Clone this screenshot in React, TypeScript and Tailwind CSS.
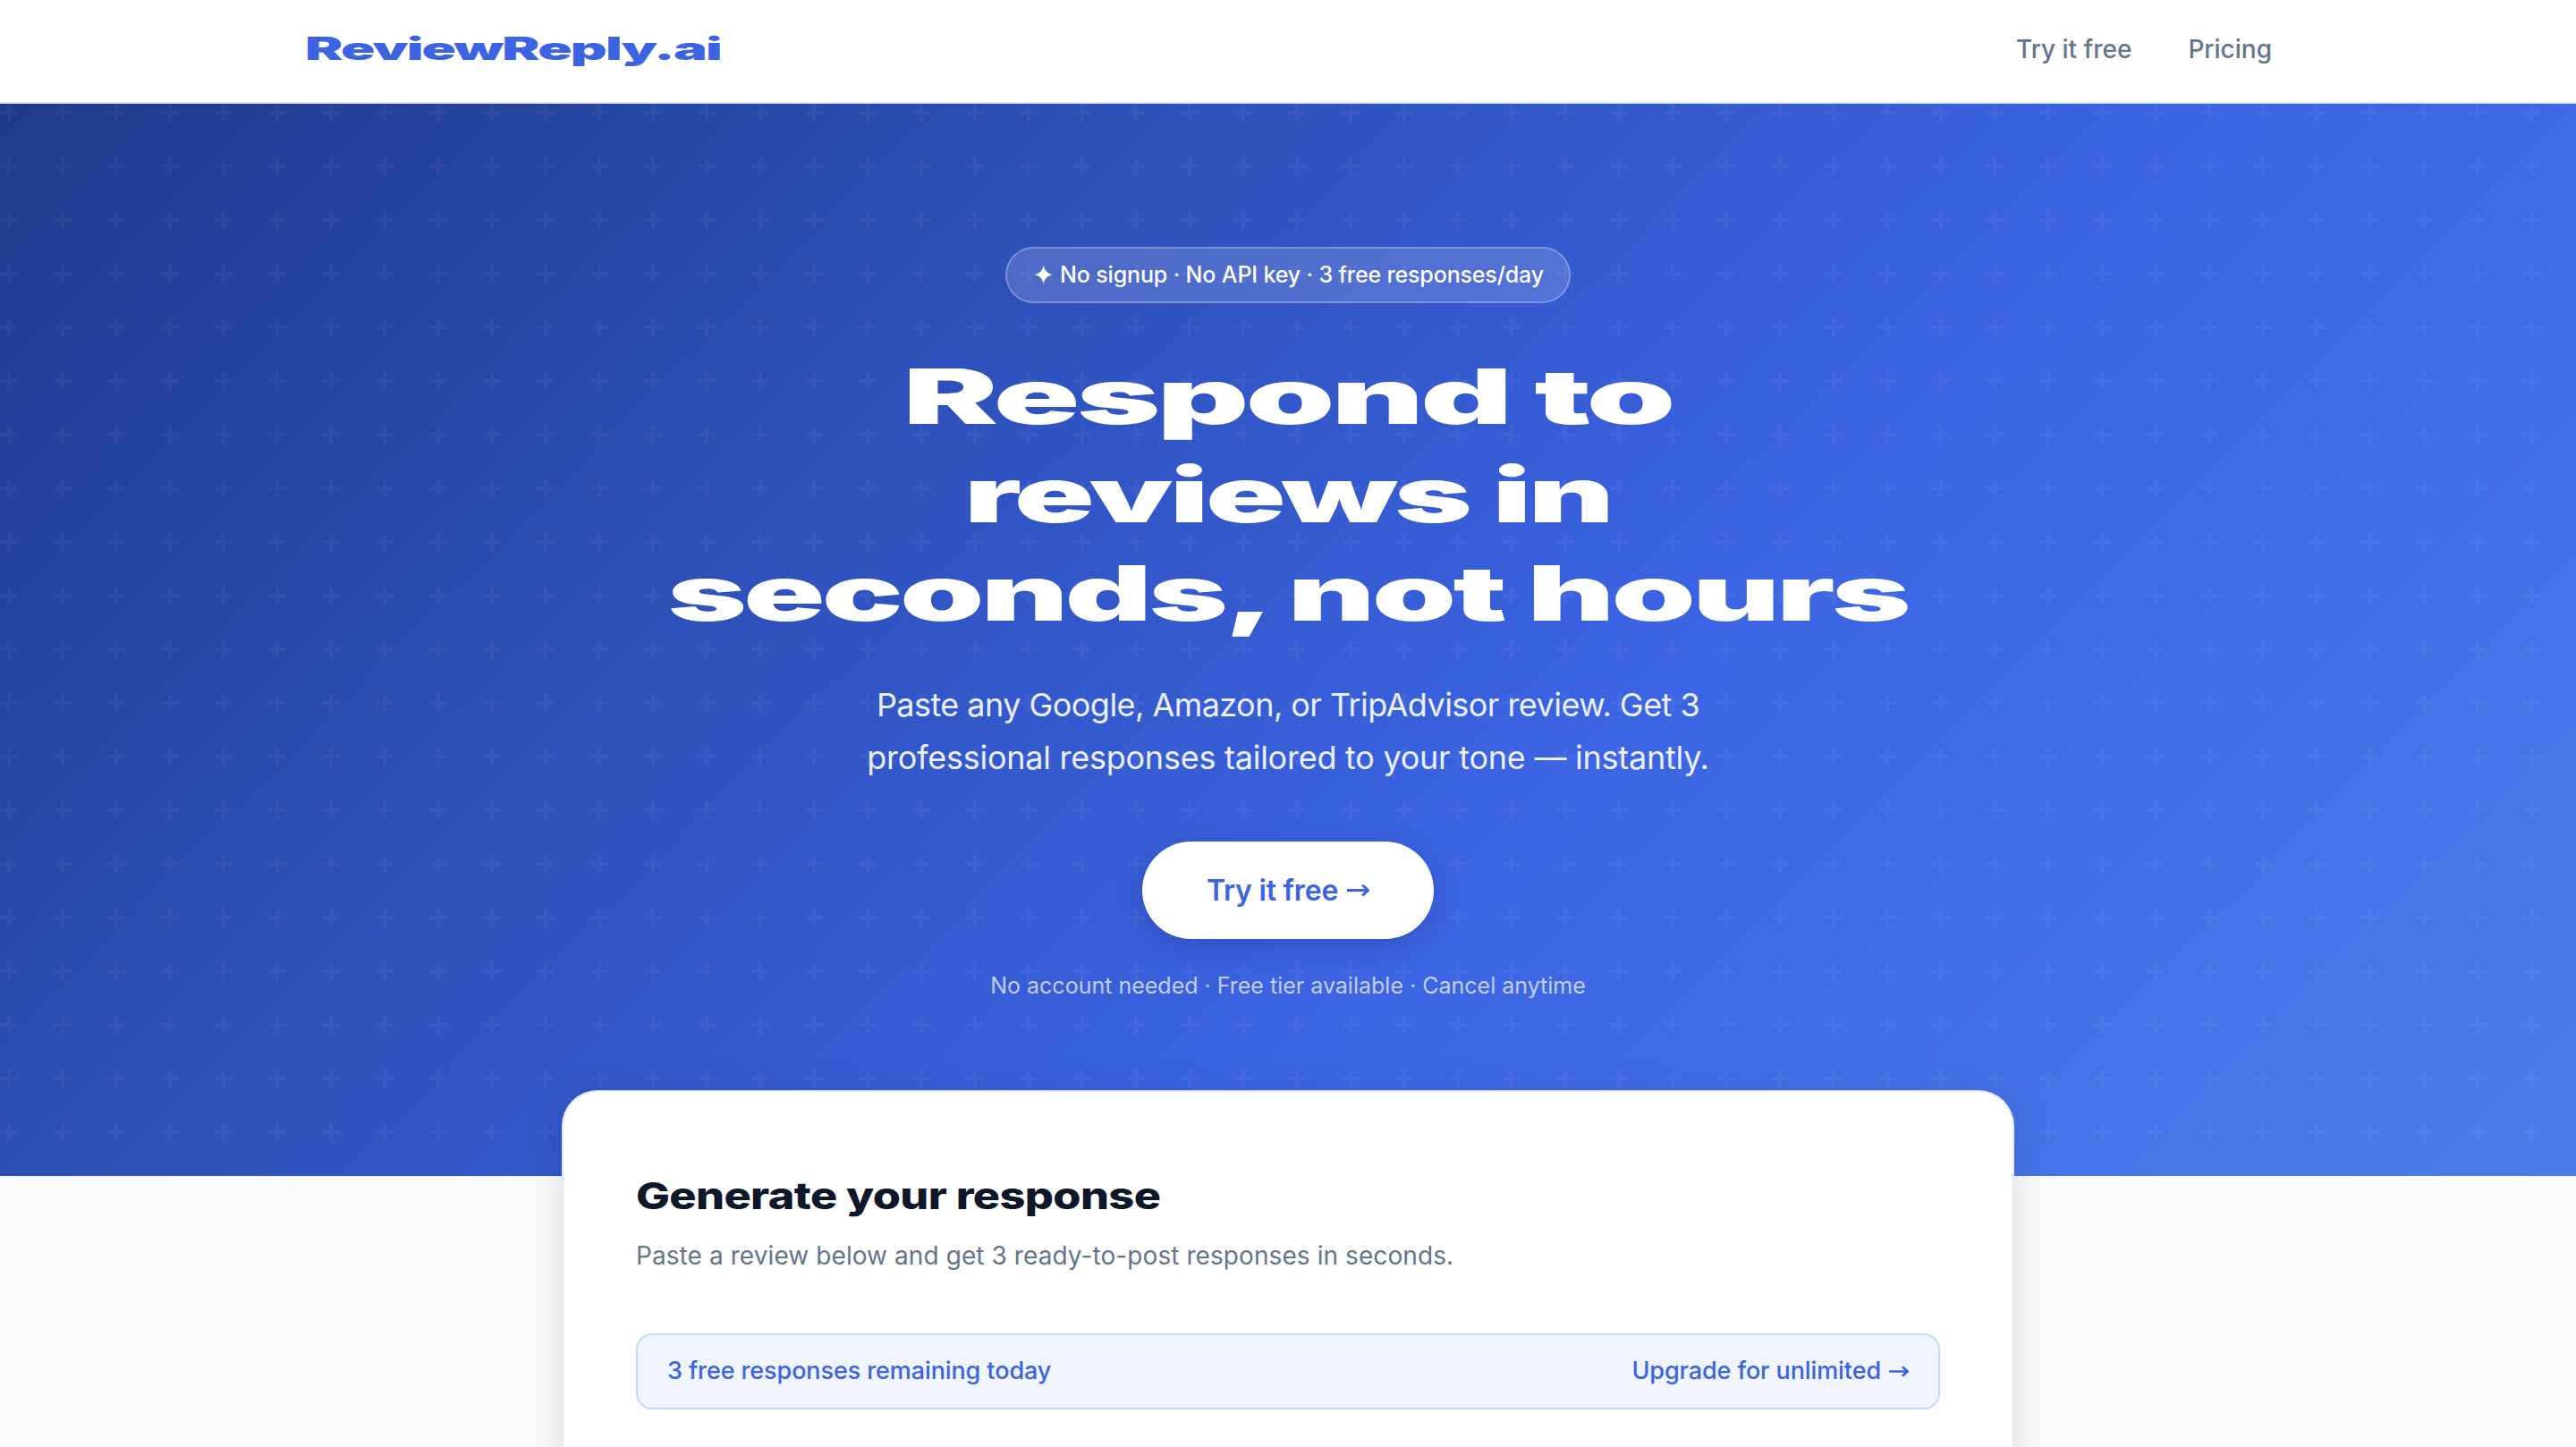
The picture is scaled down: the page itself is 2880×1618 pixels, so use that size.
function Arrow({ className }: { className: string }) {
  return (
    <svg className={className} viewBox="0 0 25 15" fill="none" stroke="currentColor" strokeWidth="3" aria-hidden="true">
      <path d="M0 7.5H23M17 1.5L23.5 7.5L17 13.5" />
    </svg>
  );
}

export default function App() {
  const sans = "font-['Inter','Noto_Sans',sans-serif]";
  const wide = "font-['Inter','Liberation_Sans',sans-serif]";
  return (
    <div className={`h-[1618px] overflow-hidden bg-[#f8fafc] ${sans}`}>
      <nav className="flex h-[116px] items-center justify-between border-b-2 border-[#e2e8f0] bg-white pb-[5px] pl-[341px] pr-[340px]">
        <div className={`origin-left scale-x-[1.81] text-[35px] font-black tracking-[-1px] text-[#3b63e2] ${wide}`}>ReviewReply.ai</div>
        <div className="flex items-center gap-[63px] text-[28px] font-medium text-[#64748b]">
          <span>Try it free</span>
          <span>Pricing</span>
        </div>
      </nav>
      <section className="relative flex h-[1199px] flex-col items-center overflow-hidden bg-[linear-gradient(135deg,#1e3a8a_0%,#3b63e2_60%,#4c7cea_100%)] pt-[160px]">
        <svg className="absolute inset-0 h-full w-full" aria-hidden="true">
          <defs>
            <pattern id="plus" width="60" height="60" patternUnits="userSpaceOnUse">
              <path d="M8 0h4v8h8v4h-8v8h-4v-8H0V8h8z" fill="#ffffff" fillOpacity="0.045" />
            </pattern>
          </defs>
          <rect width="100%" height="100%" fill="url(#plus)" />
        </svg>
        <div className="relative flex flex-col items-center">
          <div className="flex h-[63px] w-[632px] items-center justify-center gap-[6px] rounded-full border-2 border-white/25 bg-white/15 text-[25px] font-medium tracking-[-0.15px] text-white">
            <span className="font-['DejaVu_Sans',sans-serif] text-[30px] leading-none">✦</span>
            <span>No signup · No API key · 3 free responses/day</span>
          </div>
          <h1 className={`mt-[50px] whitespace-nowrap text-center text-[85px] font-black leading-[110px] tracking-[-2px] text-white ${wide}`}>
            <span className="block scale-x-[1.875]">Respond to</span>
            <span className="block scale-x-[1.74]">reviews in</span>
            <span className="block scale-x-[1.77]">seconds, not hours</span>
          </h1>
          <p className="mt-[40px] w-[1000px] whitespace-nowrap text-center text-[36px] leading-[59px] tracking-[-0.55px] text-white/90">
            Paste any Google, Amazon, or TripAdvisor review. Get 3
            <span className="block tracking-[-0.25px]">professional responses tailored to your tone — instantly.</span>
          </p>
          <button className="mt-[64px] flex h-[109px] w-[326px] items-center justify-center gap-[10px] rounded-full bg-white text-[32px] font-semibold tracking-[-0.2px] text-[#3b63e2] shadow-[0_8px_32px_rgba(0,0,0,0.15)]">
            <span>Try it free</span>
            <Arrow className="h-[15px] w-[25px]" />
          </button>
          <p className="mt-[34px] text-[25px] text-white/70">No account needed · Free tier available · Cancel anytime</p>
        </div>
      </section>
      <main className="relative -mt-[96px] mx-auto h-[600px] w-[1624px] rounded-t-[40px] border-2 border-[#e2e8f0] border-b-0 bg-white px-[81px] pt-[91px] shadow-[0_8px_48px_rgba(0,0,0,0.10)]">
        <h2 className={`origin-left scale-x-[1.23] text-[41px] font-extrabold leading-[50px] tracking-[-0.5px] text-[#0f172a] ${wide}`}>Generate your response</h2>
        <p className="mt-[19px] text-[28px] leading-[46px] tracking-[0.08px] text-[#64748b]">Paste a review below and get 3 ready-to-post responses in seconds.</p>
        <div className="mt-[64px] flex h-[85px] items-center justify-between rounded-[18px] border-2 border-[#bfdbfe] bg-[#eff4fe] px-[33px] text-[27px] font-medium tracking-[-0.1px] text-[#3b63e2]">
          <span>3 free responses remaining today</span>
          <span className="flex items-center gap-[9px]">
            Upgrade for unlimited
            <Arrow className="h-[13px] w-[22px]" />
          </span>
        </div>
      </main>
    </div>
  );
}
